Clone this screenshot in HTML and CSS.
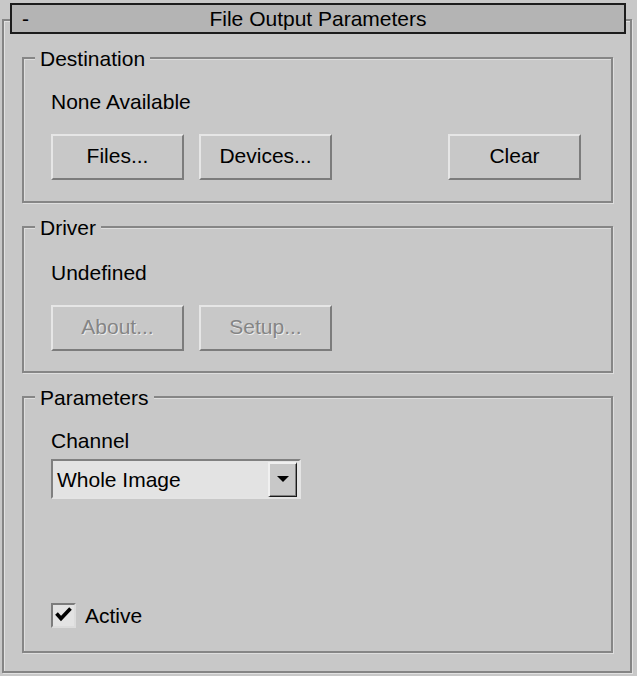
FILE: index.html
```html
<!DOCTYPE html>
<html>
<head>
<meta charset="utf-8">
<link rel="stylesheet" href="styles.css">
</head>
<body>
<div class="frame">
  <div class="title">
    <span class="collapse">-</span>
    <span class="title-text">File Output Parameters</span>
    <span></span>
  </div>

  <div class="group group-dest">
    <div class="group-label">Destination</div>
    <div class="info">None Available</div>
    <div class="btn-row">
      <button class="btn">Files...</button>
      <button class="btn">Devices...</button>
      <button class="btn btn-clear">Clear</button>
    </div>
  </div>

  <div class="group group-driver">
    <div class="group-label">Driver</div>
    <div class="info">Undefined</div>
    <div class="btn-row">
      <button class="btn btn-disabled">About...</button>
      <button class="btn btn-disabled">Setup...</button>
    </div>
  </div>

  <div class="group group-params">
    <div class="group-label">Parameters</div>
    <div class="info">Channel</div>
    <div class="select">
      <span class="select-value">Whole Image</span>
      <span class="select-arrow">
        <svg width="12" height="6" viewBox="0 0 12 6"><path d="M0 0H12L6 6Z" fill="#000"/></svg>
      </span>
    </div>
    <div class="check-row">
      <span class="checkbox">
        <svg width="21" height="21" viewBox="0 0 21 21"><path d="M3.5 8.5L8 13.5L17.5 3.5" fill="none" stroke="#000" stroke-width="3.6"/></svg>
      </span>
      <span class="check-label">Active</span>
    </div>
  </div>
</div>
</body>
</html>
```

FILE: styles.css
```css
* { box-sizing: border-box; }
html, body { margin: 0; padding: 0; }
body {
  background: #c8c8c8;
  font-family: "Liberation Sans", Arial, sans-serif;
  font-size: 21px;
  line-height: 24px;
  color: #000;
  width: 637px;
  height: 676px;
  overflow: hidden;
}
.frame {
  margin: 19px 5px 3px 2px;
  height: 654px;
  border: 2px solid #858585;
  box-shadow: inset 1px 1px 0 #e2e2e2, 1px 1px 0 #e2e2e2;
  padding-bottom: 18px;
  display: flex;
  flex-direction: column;
}
.title {
  margin: -18px 4px 0 6px;
  height: 31px;
  border: 2px solid #1c1c1c;
  background: #b4b4b4;
  display: grid;
  grid-template-columns: 1fr auto 1fr;
  line-height: 27px;
}
.collapse { padding-left: 10px; }
.title-text { white-space: nowrap; }
.group {
  margin: 23px 17px 0 18px;
  border: 2px solid #868686;
  box-shadow: inset 1px 1px 0 #dedede, 1px 1px 0 #dedede;
  padding: 0 30px 21px 27px;
  display: flex;
  flex-direction: column;
}
.group-driver { padding-bottom: 20px; }
.group-params { padding-bottom: 23px; }
.group-label {
  align-self: flex-start;
  margin: -12px 0 0 -16px;
  padding: 0 5px;
  background: #c8c8c8;
}
.info { margin-top: 19px; }
.group-driver .info { margin-top: 21px; }
.btn-row {
  display: flex;
  gap: 15px;
  margin-top: 20px;
}
.btn {
  appearance: none;
  -webkit-appearance: none;
  width: 133px;
  height: 46px;
  margin: 0;
  padding: 0 0 2px 0;
  font: inherit;
  color: #000;
  background: #c8c8c8;
  border-style: solid;
  border-width: 2px;
  border-color: #e6e6e6 #7c7c7c #7c7c7c #e6e6e6;
}
.btn-clear { margin-left: auto; }
.btn-disabled {
  color: #858585;
  text-shadow: 1px 1px 0 #ececec;
}
.select {
  margin-top: 6px;
  width: 250px;
  height: 40px;
  border-style: solid;
  border-width: 2px;
  border-color: #808080 #e4e4e4 #e4e4e4 #808080;
  background: #e3e3e3;
  display: flex;
  padding: 1px 2px 0 4px;
}
.select-value {
  flex: 1;
  line-height: 35px;
}
.select-arrow {
  width: 29px;
  height: 35px;
  background: #c8c8c8;
  border-style: solid;
  border-width: 2px 1px 1px 2px;
  border-color: #f0f0f0 #1a1a1a #1a1a1a #f0f0f0;
  box-shadow: inset -1px -1px 0 #808080;
  display: flex;
  align-items: center;
  justify-content: center;
  padding-bottom: 2px;
}
.check-row {
  margin-top: 104px;
  height: 25px;
  display: flex;
  align-items: center;
  gap: 9px;
}
.checkbox {
  width: 25px;
  height: 25px;
  border-style: solid;
  border-width: 2px;
  border-color: #7c7c7c #dcdcdc #dcdcdc #7c7c7c;
  background: #e3e3e3;
  display: block;
}
.checkbox svg { display: block; }
.check-label { line-height: 24px; }
```
